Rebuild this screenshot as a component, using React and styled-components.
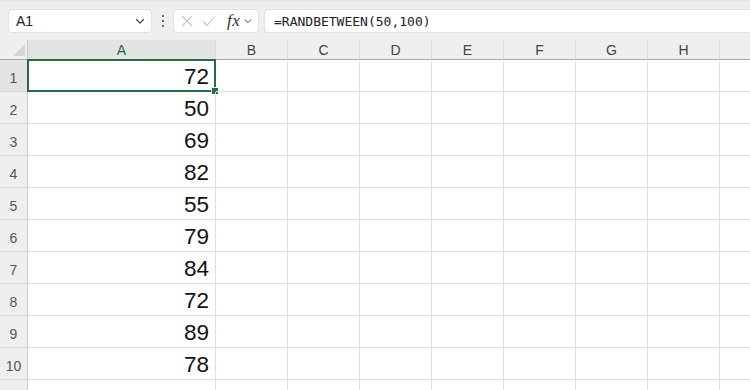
import React from 'react'
import styled, { createGlobalStyle } from 'styled-components'

const columns = ['A', 'B', 'C', 'D', 'E', 'F', 'G', 'H', '']
const values = [72, 50, 69, 82, 55, 79, 84, 72, 89, 78]

const GlobalStyle = createGlobalStyle`
  html, body {
    margin: 0;
    padding: 0;
    background: #ffffff;
    overflow: hidden;
  }
  body {
    font-family: 'Liberation Sans', Arial, sans-serif;
  }
`

const ChevronDown = ({ size = 12 }) => (
  <svg width={size} height={size} viewBox='0 0 12 12' fill='none'>
    <path d='M2.5 4.5 L6 8 L9.5 4.5' stroke='#444' strokeWidth='1.2' strokeLinecap='round' strokeLinejoin='round' />
  </svg>
)

export const App = () => {
  return (
    <Page>
      <GlobalStyle />
      <Toolbar>
        <NameBox>
          <span>A1</span>
          <ChevronDown />
        </NameBox>
        <Dots>
          <i />
          <i />
          <i />
        </Dots>
        <FormulaTools>
          <svg width='12' height='12' viewBox='0 0 12 12'>
            <path d='M1 1 L11 11 M11 1 L1 11' stroke='#c4c4c4' strokeWidth='1.1' />
          </svg>
          <svg width='14' height='12' viewBox='0 0 14 12'>
            <path d='M1 6.5 L5 10.5 L13 1.5' stroke='#c4c4c4' strokeWidth='1.1' fill='none' />
          </svg>
          <Fx>fx</Fx>
          <SmallChevron>
            <ChevronDown size={10} />
          </SmallChevron>
        </FormulaTools>
        <FormulaInput>=RANDBETWEEN(50,100)</FormulaInput>
      </Toolbar>
      <Sheet>
        <Corner>
          <svg width='12' height='12' viewBox='0 0 12 12'>
            <path d='M12 0 L12 12 L0 12 Z' fill='#d6d6d6' />
          </svg>
        </Corner>
        {columns.map((c, k) => (
          <ColHeader key={k} $active={c === 'A'}>
            {c}
          </ColHeader>
        ))}
        {values.map((v, i) => (
          <React.Fragment key={i}>
            <RowHeader $active={i === 0}>{i + 1}</RowHeader>
            <Cell $selected={i === 0}>{v}</Cell>
            {columns.slice(1).map((c, k) => (
              <Cell key={k} />
            ))}
          </React.Fragment>
        ))}
        <RowHeader>11</RowHeader>
        {columns.map((c, k) => (
          <Cell key={k} />
        ))}
      </Sheet>
    </Page>
  )
}

const Page = styled.div`
  width: 750px;
  height: 390px;
  overflow: hidden;
  background: #ffffff;
`

const Toolbar = styled.div`
  height: 40px;
  box-sizing: border-box;
  display: flex;
  align-items: center;
  padding: 0 0 0 8px;
  background: #efeff0;
  border-top: 2px solid #e9e6e7;
`

const Box = styled.div`
  height: 24px;
  box-sizing: border-box;
  background: #ffffff;
  border: 1px solid #e2e2e2;
  border-radius: 4px;
  display: flex;
  align-items: center;
`

const NameBox = styled(Box)`
  width: 144px;
  padding: 0 5px 0 7px;
  justify-content: space-between;
  font-size: 14px;
  color: #222;
`

const Dots = styled.div`
  width: 21px;
  display: flex;
  flex-direction: column;
  align-items: center;
  gap: 3px;

  i {
    width: 2px;
    height: 2px;
    background: #444;
    border-radius: 1px;
  }
`

const FormulaTools = styled(Box)`
  width: 86px;
  padding: 0 0 0 7px;
  gap: 9px;
`

const Fx = styled.span`
  font-family: 'Liberation Serif', 'Times New Roman', serif;
  font-style: italic;
  font-size: 17px;
  color: #333;
  margin-left: 2px;
  letter-spacing: 0.5px;
`

const SmallChevron = styled.span`
  display: flex;
  margin-left: -6px;
`

const FormulaInput = styled(Box)`
  flex: 1;
  margin-left: 5px;
  padding-left: 9px;
  border-right: none;
  border-radius: 4px 0 0 4px;
  font-family: 'DejaVu Sans Mono', 'Liberation Mono', monospace;
  font-size: 13px;
  color: #222;
`

const Sheet = styled.div`
  display: grid;
  grid-template-columns: 28px 188px repeat(8, 72px);
  grid-template-rows: 20px repeat(11, 32px);
`

const Corner = styled.div`
  background: #efefef;
  border-right: 1px solid #c8c8c8;
  border-bottom: 1px solid #a8a8a8;
  display: flex;
  align-items: flex-end;
  justify-content: flex-end;
  padding: 0 2px 3px 0;
`

const ColHeader = styled.div`
  background: ${(p) => (p.$active ? '#e3e3e3' : '#efefef')};
  color: ${(p) => (p.$active ? '#1e6b41' : '#444')};
  border-right: 1px solid #dadada;
  border-bottom: 1px solid #a8a8a8;
  display: flex;
  align-items: center;
  justify-content: center;
  font-size: 14px;
`

const RowHeader = styled.div`
  background: ${(p) => (p.$active ? '#e3e3e3' : '#efefef')};
  color: #555;
  border-right: 1px solid #c8c8c8;
  border-bottom: 1px solid #dadada;
  display: flex;
  align-items: center;
  justify-content: center;
  padding-top: 4px;
  font-size: 14px;
`

const Cell = styled.div`
  position: relative;
  border-right: 1px solid #dedede;
  border-bottom: 1px solid #dedede;
  display: flex;
  align-items: center;
  justify-content: flex-end;
  padding: 3px 6px 0 0;
  font-size: 22.5px;
  color: #111;

  ${(p) =>
    p.$selected &&
    `
    &::before {
      content: '';
      position: absolute;
      left: -1px;
      top: -1px;
      right: -1px;
      bottom: -1px;
      border: 2px solid #2a6b45;
    }
    &::after {
      content: '';
      position: absolute;
      right: -4px;
      bottom: -4px;
      width: 6px;
      height: 6px;
      background: #2a6b45;
      border: 1px solid #ffffff;
    }
  `}
`

export default App
